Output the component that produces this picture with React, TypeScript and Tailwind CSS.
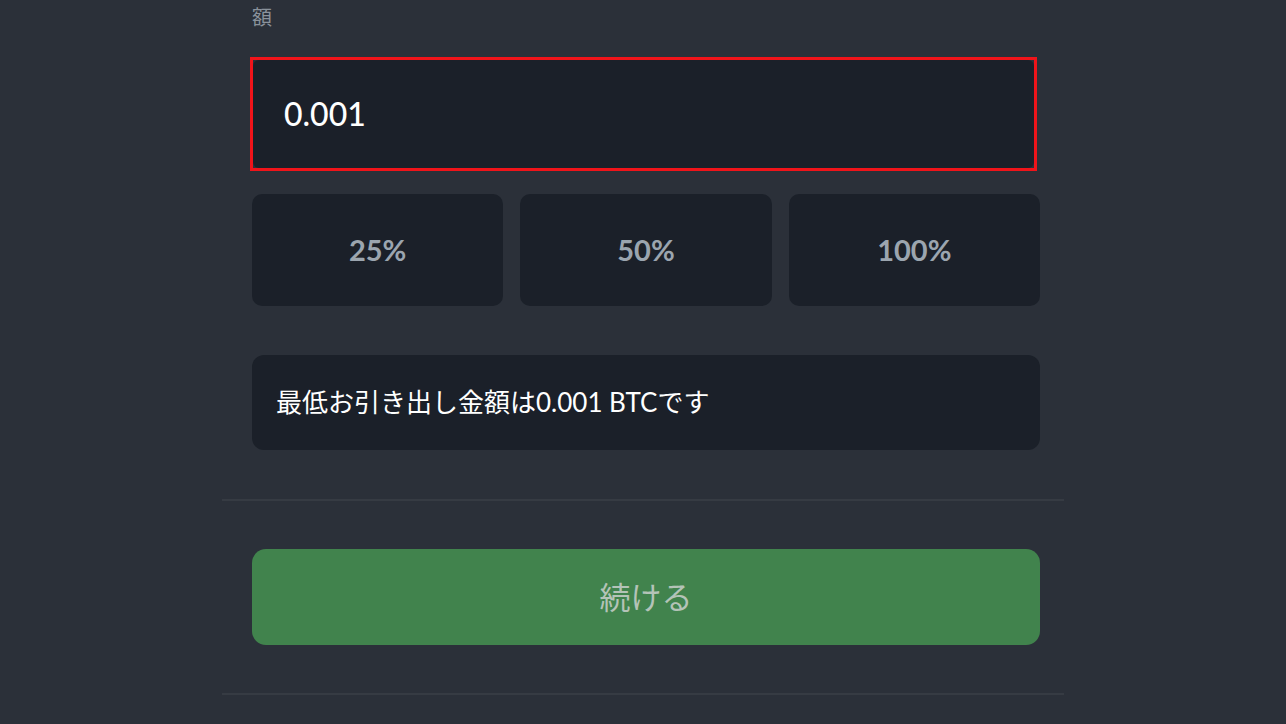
import React from "react";

export default function App() {
  const jp = { fontFamily: '"Lato", "Noto Sans CJK JP", sans-serif' };
  return (
    <div className="w-full h-[724px] bg-[#2b3039] overflow-hidden flex justify-center" style={jp}>
      <div className="w-[842px] flex flex-col">
        <div className="pl-[30px] pr-[24px] flex flex-col">
          <div className="pt-[4px] h-[57px] text-[20px] leading-[26px] text-[#8a929b]">額</div>
          <div className="-ml-[2px] w-[787px] h-[114px] border-[3px] border-[#f0141a] flex">
            <div className="flex-1 rounded-md bg-[#1b2029] flex items-center pl-[31px] text-[32px] text-white font-medium">
              0.001
            </div>
          </div>
          <div className="mt-[23px] grid grid-cols-3 gap-[17px]">
            {["25%", "50%", "100%"].map((t) => (
              <div
                key={t}
                className="h-[112px] rounded-[10px] bg-[#1b2029] flex items-center justify-center text-[29px] font-bold text-[#9ba5af]"
              >
                {t}
              </div>
            ))}
          </div>
          <div className="mt-[49px] h-[95px] rounded-[12px] bg-[#1b2029] flex items-center pl-[24px] text-[26px] text-white">
            最低お引き出し金額は0.001 BTCです
          </div>
        </div>
        <div className="mt-[49px] h-[2px] bg-[#363b43]" />
        <div className="pl-[30px] pr-[24px] mt-[48px]">
          <div className="h-[96px] rounded-[14px] bg-[#41834d] flex items-center justify-center text-[31px] text-[#b4c3b8]">
            続ける
          </div>
        </div>
        <div className="mt-[48px] h-[2px] bg-[#363b43]" />
      </div>
    </div>
  );
}
